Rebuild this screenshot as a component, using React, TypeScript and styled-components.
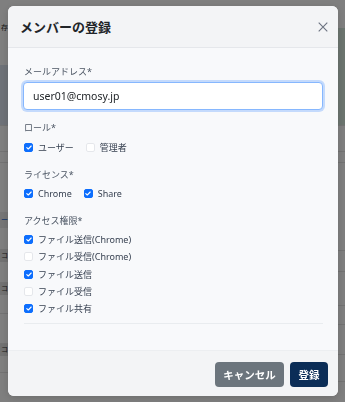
import React from "react";
import styled, { createGlobalStyle } from "styled-components";

const Global = createGlobalStyle`
  html, body { margin: 0; padding: 0; }
  body {
    width: 345px;
    height: 402px;
    overflow: hidden;
    background: #ffffff;
    font-family: "Noto Sans", "Noto Sans CJK JP", sans-serif;
  }
`;

/* ---------- background page (dimmed) ---------- */
const Page = styled.div`
  width: 345px;
  height: 402px;
  display: grid;
  grid-template-columns: 8px 1fr 8px;
  background: #ffffff;
`;

const SideCol = styled.div`
  display: flex;
  flex-direction: column;
  overflow: hidden;
`;

const BgRow = styled.div<{ $h: number; $bg?: string; $line?: boolean }>`
  height: ${(p) => p.$h}px;
  flex: none;
  display: flex;
  align-items: center;
  justify-content: flex-end;
  background: ${(p) => p.$bg || "transparent"};
  border-bottom: ${(p) => (p.$line ? "1px solid #e6e6e6" : "none")};
  overflow: hidden;
`;

const EdgeText = styled.span<{ $blue?: boolean }>`
  font-size: 7px;
  line-height: 8px;
  color: ${(p) => (p.$blue ? "#2a6fd6" : "#333")};
  white-space: nowrap;
`;

const Overlay = styled.div`
  position: fixed;
  inset: 0;
  background: rgba(0, 0, 0, 0.5);
`;

/* ---------- modal ---------- */
const Modal = styled.div`
  position: fixed;
  top: 6px;
  left: 8px;
  width: 330px;
  height: 390px;
  border-radius: 6px;
  overflow: hidden;
  display: flex;
  flex-direction: column;
  background: #f8f9fb;
  box-shadow: 0 2px 8px rgba(0, 0, 0, 0.15);
`;

const Header = styled.div`
  height: 41px;
  flex: none;
  display: flex;
  align-items: center;
  justify-content: space-between;
  padding: 0 10px 0 12px;
  background: #f3f4f6;
  border-bottom: 1px solid #e5e7eb;
`;

const Title = styled.h2`
  margin: 0;
  font-size: 13px;
  font-weight: 700;
  color: #212529;
  line-height: 16px;
`;

const CloseButton = styled.button`
  width: 11px;
  height: 11px;
  padding: 0;
  border: none;
  background: none;
  display: flex;
  align-items: center;
  justify-content: center;
  color: #6b7280;
  cursor: pointer;
`;

const Body = styled.div`
  flex: 1;
  padding: 17px 15px 0 16px;
  display: flex;
  flex-direction: column;
`;

const Group = styled.div<{ $mb: number }>`
  display: flex;
  flex-direction: column;
  margin-bottom: ${(p) => p.$mb}px;
`;

const Label = styled.div<{ $mb: number }>`
  font-size: 9px;
  line-height: 13px;
  color: #4b5563;
  margin-bottom: ${(p) => p.$mb}px;
`;

const Input = styled.input`
  box-sizing: border-box;
  width: 300px;
  height: 28px;
  margin-left: -1px;
  border: 1px solid #86b7fe;
  border-radius: 4px;
  box-shadow: 0 0 0 2px rgba(13, 110, 253, 0.22);
  padding: 0 9px;
  font-family: "Noto Sans", "Noto Sans CJK JP", sans-serif;
  font-size: 10.5px;
  color: #212529;
  background: #ffffff;
  outline: none;
`;

const CheckRow = styled.div<{ $stack?: boolean }>`
  display: flex;
  flex-direction: ${(p) => (p.$stack ? "column" : "row")};
  gap: ${(p) => (p.$stack ? "4.3px" : "12px")};
`;

const CheckItem = styled.label`
  display: flex;
  align-items: center;
  gap: 5px;
  height: 13px;
  font-size: 9px;
  color: #374151;
  white-space: nowrap;
`;

const Box = styled.span<{ $on: boolean }>`
  width: 9px;
  height: 9px;
  box-sizing: border-box;
  border-radius: 2px;
  flex: none;
  display: flex;
  align-items: center;
  justify-content: center;
  background: ${(p) => (p.$on ? "#0d6efd" : "#ffffff")};
  border: 1px solid ${(p) => (p.$on ? "#0d6efd" : "#e5e7eb")};
`;

const Divider = styled.div`
  height: 1px;
  background: #e9ecef;
  margin-top: 7.5px;
  width: 299px;
`;

const Footer = styled.div`
  height: 46px;
  flex: none;
  display: flex;
  align-items: center;
  justify-content: flex-end;
  gap: 6px;
  padding: 1px 10px 0 0;
  background: #f3f4f6;
  border-top: 1px solid #eceef1;
  box-sizing: border-box;
`;

const Button = styled.button<{ $variant: "secondary" | "primary" }>`
  height: 25px;
  padding: 0;
  border: none;
  border-radius: 4px;
  font-family: "Noto Sans", "Noto Sans CJK JP", sans-serif;
  font-size: 10.5px;
  font-weight: 700;
  white-space: nowrap;
  color: #ffffff;
  background: ${(p) => (p.$variant === "primary" ? "#0b2d57" : "#6c757d")};
  width: ${(p) => (p.$variant === "primary" ? "38px" : "69px")};
  display: flex;
  align-items: center;
  justify-content: center;
`;

const Check = ({ on, label }: { on: boolean; label: string }) => (
  <CheckItem>
    <Box $on={on}>
      {on && (
        <svg width="6" height="5" viewBox="0 0 6 5">
          <path d="M0.8 2.6 L2.3 4 L5.2 1" fill="none" stroke="#fff" strokeWidth="1.1" strokeLinecap="round" strokeLinejoin="round" />
        </svg>
      )}
    </Box>
    {label}
  </CheckItem>
);

export default function App() {
  return (
    <>
      <Global />
      <Page>
        <SideCol>
          <BgRow $h={20} />
          <BgRow $h={16}><EdgeText>存</EdgeText></BgRow>
          <BgRow $h={29} />
          <BgRow $h={60} $bg="#dde5f0" $line />
          <BgRow $h={25} $line />
          <BgRow $h={10} $line />
          <BgRow $h={49} />
          <BgRow $h={16} $bg="#ededed"><EdgeText $blue>ー</EdgeText></BgRow>
          <BgRow $h={21} $line />
          <BgRow $h={12} $bg="#e4e4e4"><EdgeText>コ</EdgeText></BgRow>
          <BgRow $h={20} $line />
          <BgRow $h={12} $bg="#e4e4e4"><EdgeText>コ</EdgeText></BgRow>
          <BgRow $h={18} $line />
          <BgRow $h={29} $line />
          <BgRow $h={12} $bg="#e4e4e4"><EdgeText>コ</EdgeText></BgRow>
          <BgRow $h={16} $line />
        </SideCol>
        <div />
        <SideCol>
          <BgRow $h={28} />
          <BgRow $h={97} $bg="#d8eadf" $line />
          <BgRow $h={25} $line />
          <BgRow $h={10} $line />
          <BgRow $h={87} $line />
          <BgRow $h={20} $line />
          <BgRow $h={33} $line />
          <BgRow $h={18} $line />
          <BgRow $h={29} $line />
          <BgRow $h={26} $line />
        </SideCol>
      </Page>
      <Overlay />
      <Modal>
        <Header>
          <Title>メンバーの登録</Title>
          <CloseButton aria-label="close">
            <svg width="10" height="10" viewBox="0 0 10 10">
              <path d="M0.7 0.7 L9.3 9.3 M9.3 0.7 L0.7 9.3" stroke="currentColor" strokeWidth="1.1" />
            </svg>
          </CloseButton>
        </Header>
        <Body>
          <Group $mb={11}>
            <Label $mb={4}>メールアドレス*</Label>
            <Input defaultValue="user01@cmosy.jp" />
          </Group>
          <Group $mb={14}>
            <Label $mb={6.5}>ロール*</Label>
            <CheckRow>
              <Check on label="ユーザー" />
              <Check on={false} label="管理者" />
            </CheckRow>
          </Group>
          <Group $mb={14}>
            <Label $mb={6.5}>ライセンス*</Label>
            <CheckRow>
              <Check on label="Chrome" />
              <Check on label="Share" />
            </CheckRow>
          </Group>
          <Group $mb={0}>
            <Label $mb={6}>アクセス権限*</Label>
            <CheckRow $stack>
              <Check on label="ファイル送信(Chrome)" />
              <Check on={false} label="ファイル受信(Chrome)" />
              <Check on label="ファイル送信" />
              <Check on={false} label="ファイル受信" />
              <Check on label="ファイル共有" />
            </CheckRow>
          </Group>
          <Divider />
        </Body>
        <Footer>
          <Button $variant="secondary">キャンセル</Button>
          <Button $variant="primary">登録</Button>
        </Footer>
      </Modal>
    </>
  );
}
